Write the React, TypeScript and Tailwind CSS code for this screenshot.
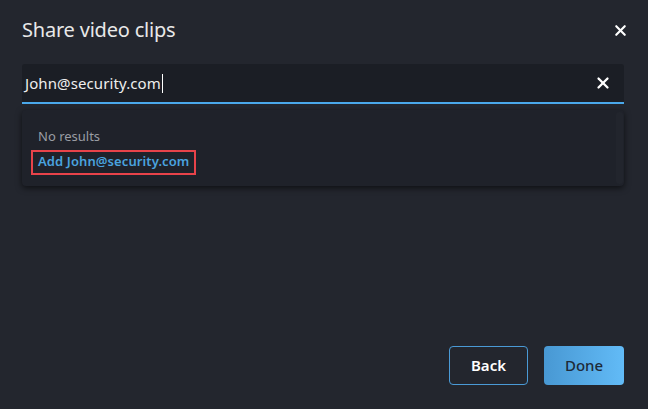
import { X } from "lucide-react";

export default function App() {
    return (
        <div
            className="w-[648px] h-[409px] bg-[#23262e] text-[#e8e8e8] flex flex-col pl-[22px] pr-[24px] overflow-hidden"
            style={{ fontFamily: '"Noto Sans", "Open Sans", sans-serif' }}
        >
            <header className="flex items-center justify-between h-[60px]">
                <h1 className="text-[20px] font-normal tracking-[-0.2px]">Share video clips</h1>
                <X className="w-[17px] h-[17px] -mr-[5px]" strokeWidth={3} color="#ffffff" />
            </header>

            <div className="mt-[4px] h-[40px] bg-[#1b1e25] rounded-t-[3px] border-b-2 border-[#4aa8ea] flex items-center pl-[3px] pr-[12px]">
                <span className="text-[15px] text-[#eeeeee] tracking-[0.1px]">John@security.com</span>
                <span className="w-px h-[19px] bg-white ml-[1px]" />
                <X className="ml-auto w-[18px] h-[18px]" strokeWidth={3} color="#ffffff" />
            </div>

            <div className="mt-[6px] h-[76px] bg-[#1f222a] rounded-[4px] shadow-[0_2px_6px_rgba(0,0,0,0.6)] flex">
                <div className="flex-1 flex flex-col pl-[9px] pt-[17px]">
                    <span className="text-[13px] text-[#9a9da4] pl-[7px]">No results</span>
                    <span className="mt-[3px] self-start border-2 border-[#e8434a] px-[5px] h-[25px] flex items-center text-[13px] font-semibold text-[#4aa3df] tracking-[0.1px]">
                        Add John@security.com
                    </span>
                </div>
                <div className="w-[7px] my-[2px] mr-[1px] rounded-[3px] bg-[#22252d]" />
            </div>

            <div className="mt-auto mb-[24px] flex justify-end gap-[16px]">
                <button className="w-[79px] h-[39px] rounded-[4px] border border-[#4a9ad6] text-white text-[15px] font-semibold">
                    Back
                </button>
                <button className="w-[80px] h-[39px] rounded-[4px] bg-gradient-to-r from-[#4898d3] to-[#62bbf7] text-[#1e2a38] text-[15px] font-medium">
                    Done
                </button>
            </div>
        </div>
    );
}
